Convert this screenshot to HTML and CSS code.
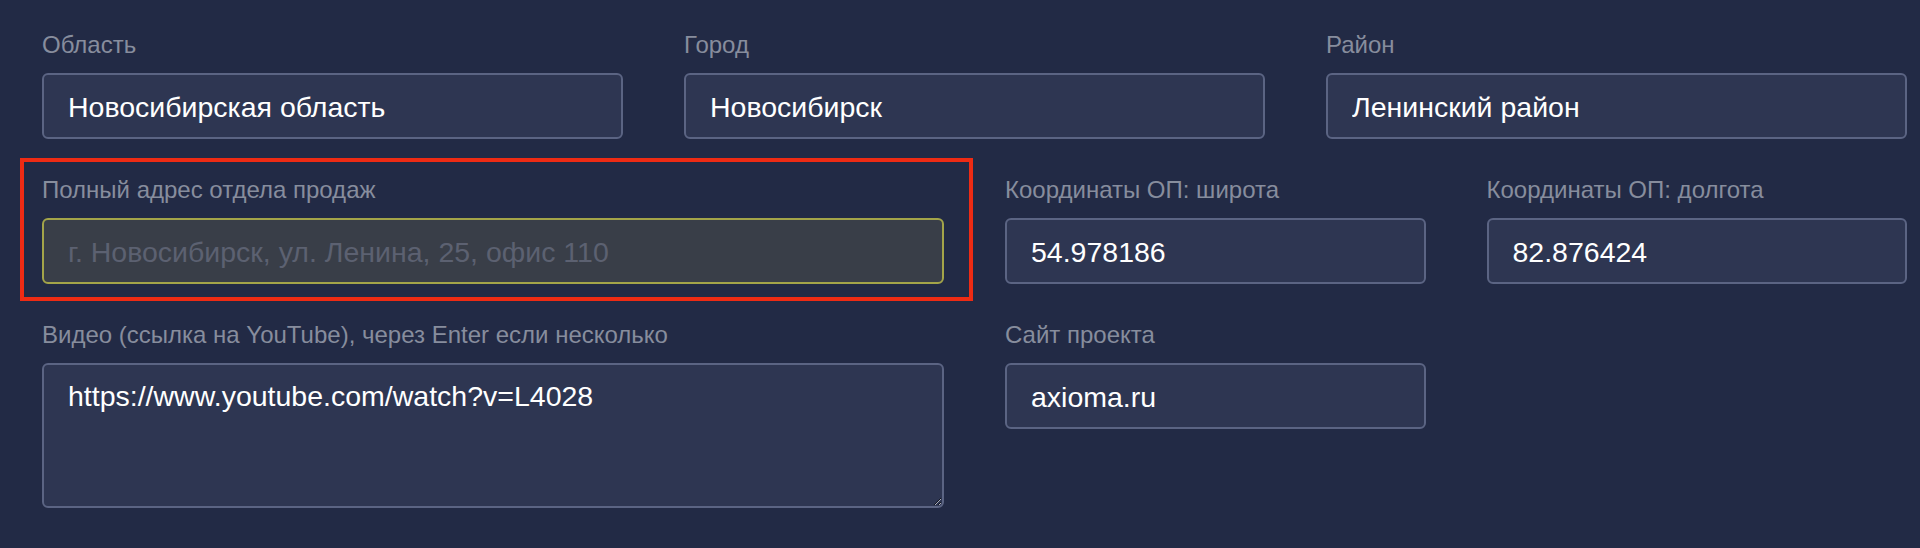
FILE: index.html
```html
<!DOCTYPE html>
<html lang="ru">
<head>
    <meta charset="UTF-8">
    <meta name="viewport" content="width=device-width, initial-scale=1.0">
    <title>Адрес отдела продаж</title>
    <link rel="stylesheet" href="styles.css">
</head>
<body>
    <!-- Location form -->
    <form class="location-form">
        <div class="row row-3">
            <div class="field">
                <label>Область</label>
                <input type="text" value="Новосибирская область">
            </div>
            <div class="field">
                <label>Город</label>
                <input type="text" value="Новосибирск">
            </div>
            <div class="field">
                <label>Район</label>
                <input type="text" value="Ленинский район">
            </div>
        </div>

        <div class="row row-4">
            <div class="field wide marked">
                <label>Полный адрес отдела продаж</label>
                <input type="text" class="attention" placeholder="г. Новосибирск, ул. Ленина, 25, офис 110">
            </div>
            <div class="field">
                <label>Координаты ОП: широта</label>
                <input type="text" value="54.978186">
            </div>
            <div class="field">
                <label>Координаты ОП: долгота</label>
                <input type="text" value="82.876424">
            </div>
        </div>

        <div class="row row-4">
            <div class="field wide">
                <label>Видео (ссылка на YouTube), через Enter если несколько</label>
                <textarea>https://www.youtube.com/watch?v=L4028</textarea>
            </div>
            <div class="field">
                <label>Сайт проекта</label>
                <input type="text" value="axioma.ru">
            </div>
        </div>
    </form>
</body>
</html>
```

FILE: styles.css
```css
body {
    margin: 0;
    padding: 0;
    font-family: "Liberation Sans", Arial, sans-serif;
    background-color: #222a45;
    height: 548px;
    overflow: hidden;
}

.location-form {
    padding: 31px 13px 0 42px;
    display: flex;
    flex-direction: column;
    gap: 37px;
}

.row {
    display: grid;
    column-gap: 61px;
}

.row-3 {
    grid-template-columns: repeat(3, 1fr);
}

.row-4 {
    grid-template-columns: repeat(4, 1fr);
}

.field {
    display: flex;
    flex-direction: column;
    position: relative;
}

.field.wide {
    grid-column: span 2;
}

/* red annotation frame around the address field */
.field.marked::after {
    content: "";
    position: absolute;
    top: -18px;
    left: -22px;
    right: -29px;
    bottom: -17px;
    border: 4px solid #ee2b14;
    pointer-events: none;
}

.field label {
    font-size: 24px;
    line-height: 28px;
    color: #878d9d;
    margin-bottom: 14px;
    white-space: nowrap;
}

.field input,
.field textarea {
    box-sizing: border-box;
    width: 100%;
    margin: 0;
    border: 2px solid #5b6483;
    border-radius: 6px;
    background-color: #2e3652;
    color: #fff;
    font-family: "Liberation Sans", Arial, sans-serif;
    font-size: 28.5px;
    outline: none;
}

.field input {
    height: 66px;
    padding: 3px 24px 0;
}

.field textarea {
    height: 145px;
    padding: 14px 24px;
    line-height: 1.2;
    resize: vertical;
}

.field input.attention {
    background-color: #393e48;
    border-color: #a3a449;
}

.field input::placeholder {
    color: #5c6171;
}
```
